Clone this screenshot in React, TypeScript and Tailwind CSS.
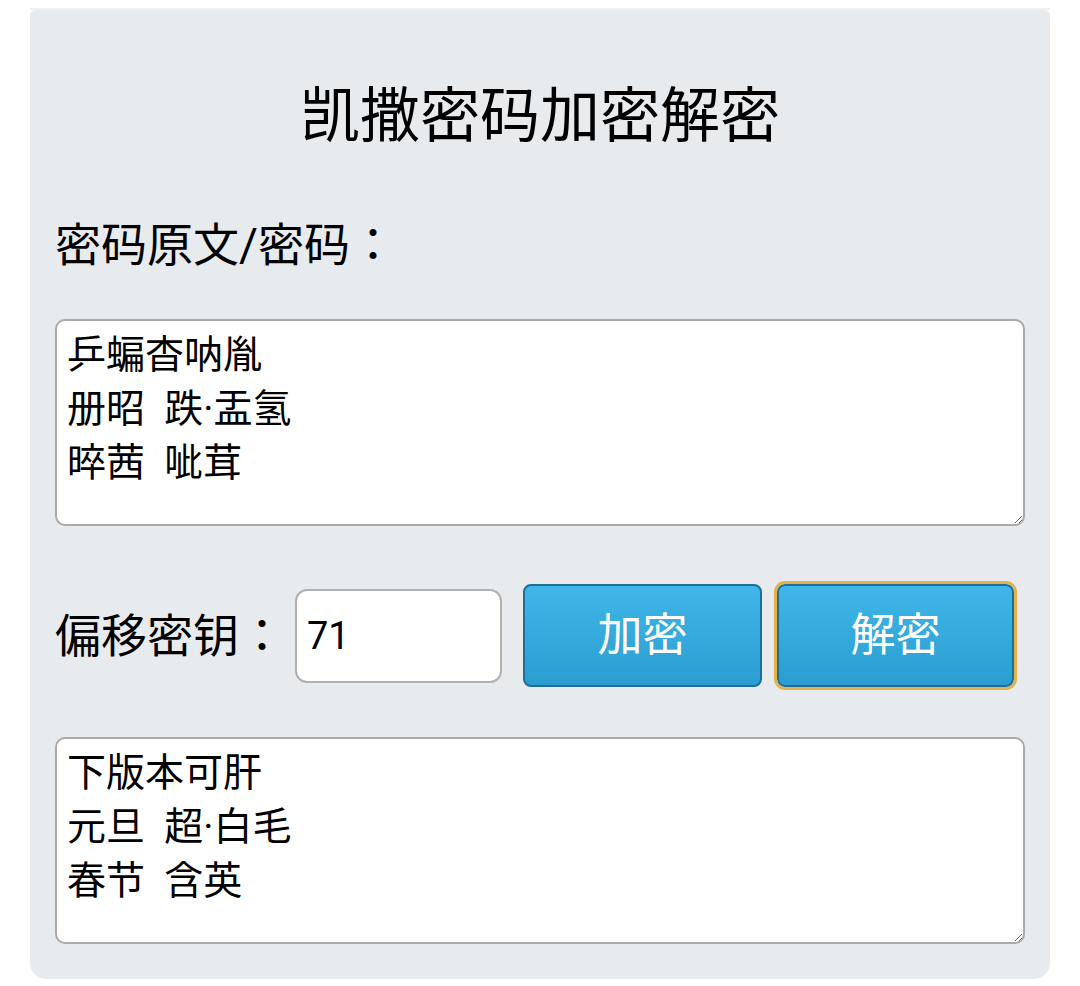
import { useState } from 'react'

const FONT = "font-['Roboto',_'Noto_Sans_CJK_JP',_'Noto_Sans_CJK_SC',_sans-serif]"

export default function App() {
  const [source, setSource] = useState('乒蝙杳呐胤\n册昭  跌·盂氢\n晬茜  呲茸')
  const [shift, setShift] = useState('71')
  const [result, setResult] = useState('下版本可肝\n元旦  超·白毛\n春节  含英')

  return (
    <div className={`min-h-screen bg-white pt-[8px] ${FONT}`}>
      <div className="mx-[30px] h-[2px] bg-[#eef0f2]" />
      <div className="mx-[30px] rounded-b-2xl rounded-t-md bg-[#e8ebee] px-[25px] pb-[35px]">
        {/* Title */}
        <h1 className="pt-[67px] text-center text-[60px] font-normal leading-[80px] text-black">
          凯撒密码加密解密
        </h1>

        <p className="mt-[58px] text-[46px] leading-[60px] text-black">密码原文/密码：</p>

        <textarea
          value={source}
          onChange={(e) => setSource(e.target.value)}
          className="mt-[44px] block h-[207px] w-full rounded-[10px] border-2 border-[#aaaaaa] bg-white px-[10px] pt-[7px] pb-[4px] text-[39px] leading-[54px] text-black outline-none"
        />

        {/* Shift row */}
        <div className="mt-[58px] flex items-center">
          <span className="text-[46px] leading-[60px] text-black">偏移密钥：</span>
          <input
            value={shift}
            onChange={(e) => setShift(e.target.value)}
            className="ml-[10px] h-[94px] w-[207px] rounded-[12px] border-2 border-[#b0b0b0] bg-white px-[10px] text-[38px] text-black outline-none"
          />
          <button className="ml-[21px] h-[103px] w-[239px] rounded-[8px] border-2 border-[#1f6e96] bg-gradient-to-b from-[#3fb7e8] to-[#2b9dd0] text-[45px] text-white">
            加密
          </button>
          <button className="ml-[15px] h-[103px] w-[237px] rounded-[8px] border-2 border-[#1f6e96] bg-gradient-to-b from-[#3fb7e8] to-[#2b9dd0] text-[45px] text-white outline outline-[3px] outline-[#e2b34a]">
            解密
          </button>
        </div>

        <textarea
          value={result}
          onChange={(e) => setResult(e.target.value)}
          className="mt-[50px] block h-[207px] w-full rounded-[10px] border-2 border-[#aaaaaa] bg-white px-[10px] pt-[7px] pb-[4px] text-[39px] leading-[54px] text-black outline-none"
        />
      </div>
    </div>
  )
}
